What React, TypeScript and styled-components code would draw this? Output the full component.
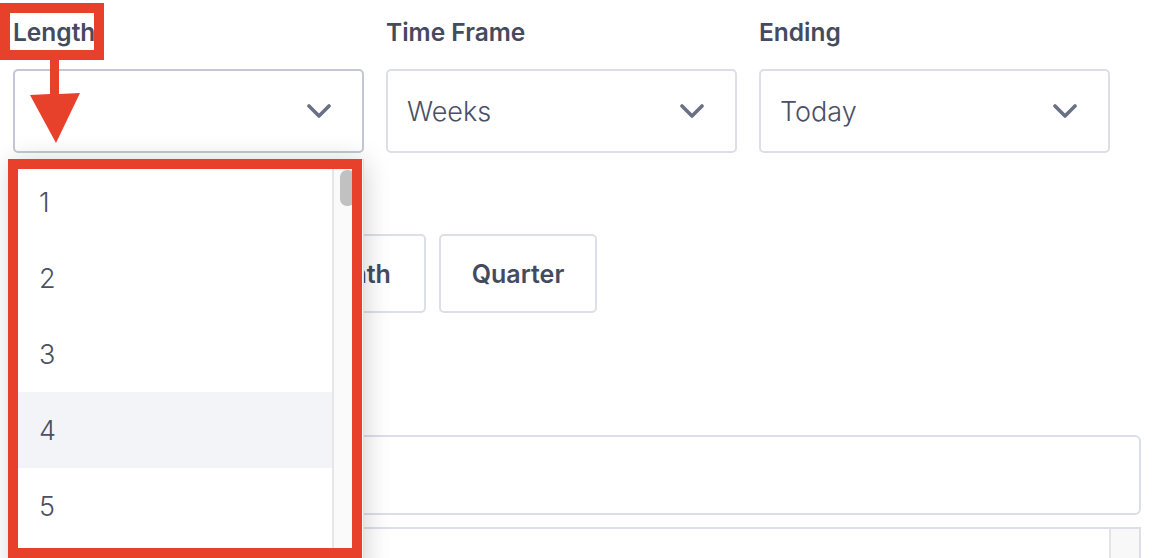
import React from "react";
import styled, { createGlobalStyle } from "styled-components";

const Global = createGlobalStyle`
  html, body { margin: 0; padding: 0; background: #ffffff; }
  body { font-family: "Inter", "Noto Sans", sans-serif; color: #444b5f; }
  * { box-sizing: border-box; }
`;

const Page = styled.div`
  position: relative;
  width: 1156px;
  height: 558px;
  overflow: hidden;
  padding: 16px 0 0 13px;
`;

const FieldRow = styled.div`
  display: grid;
  grid-template-columns: repeat(3, 351px);
  column-gap: 22px;
`;

const Field = styled.div`
  position: relative;
  display: flex;
  flex-direction: column;
`;

const Label = styled.div`
  font-size: 24.5px;
  line-height: 32px;
  font-weight: 600;
  color: #444b5f;
  margin-bottom: 21px;
`;

const SelectBox = styled.div<{ $focused?: boolean }>`
  height: 84px;
  border: 2px solid ${(p) => (p.$focused ? "#c4c7d5" : "#dcdfe6")};
  border-radius: 5px;
  display: flex;
  align-items: center;
  justify-content: space-between;
  padding: 0 31px 0 19px;
  font-size: 27px;
  font-weight: 300;
  color: #4a5065;
`;

const Section = styled.div<{ $top: number }>`
  margin-top: ${(p) => p.$top}px;
  display: flex;
  flex-direction: column;
`;

const ButtonRow = styled.div<{ $indent: number }>`
  display: flex;
  gap: 13px;
  padding-left: ${(p) => p.$indent}px;
`;

const ToggleButton = styled.div<{ $w: number }>`
  width: ${(p) => p.$w}px;
  height: 79px;
  border: 2px solid #dcdfe6;
  border-radius: 5px;
  display: flex;
  align-items: center;
  justify-content: center;
  font-size: 25px;
  font-weight: 600;
  color: #444b5f;
`;

const TextInput = styled.div`
  width: 1128px;
  height: 80px;
  border: 2px solid #dcdfe6;
  border-radius: 6px;
`;

const ListBox = styled.div`
  margin-top: 12px;
  width: 1128px;
  height: 60px;
  border: 2px solid #dcdfe6;
  border-bottom: none;
  display: flex;
  justify-content: flex-end;
`;

const ListTrack = styled.div`
  width: 30px;
  background: #f8f8f8;
  border-left: 2px solid #e4e4e4;
`;

const Dropdown = styled.div`
  position: absolute;
  left: 0;
  top: 143px;
  width: 351px;
  height: 420px;
  background: #ffffff;
  border: 1px solid #dcdfe6;
  box-shadow: 0 3px 26px rgba(0, 0, 0, 0.2);
  display: flex;
  padding-top: 4px;
  overflow: hidden;
`;

const OptionList = styled.div`
  flex: 1;
  display: flex;
  flex-direction: column;
`;

const Option = styled.div<{ $active?: boolean }>`
  flex-shrink: 0;
  height: 76px;
  display: flex;
  align-items: center;
  padding-left: 25px;
  font-size: 27px;
  font-weight: 300;
  color: #4a5065;
  background: ${(p) => (p.$active ? "#f3f4f8" : "#ffffff")};
`;

const Scrollbar = styled.div`
  position: relative;
  width: 31px;
  margin-top: -4px;
  background: #fafafa;
  border-left: 2px solid #e6e6e6;
`;

const Thumb = styled.div`
  position: absolute;
  left: 6px;
  top: 10px;
  width: 15px;
  height: 36px;
  border-radius: 7px;
  background: #c1c1c1;
`;

const RedFrame = styled.div<{ $l: number; $t: number; $w: number; $h: number }>`
  position: absolute;
  left: ${(p) => p.$l}px;
  top: ${(p) => p.$t}px;
  width: ${(p) => p.$w}px;
  height: ${(p) => p.$h}px;
  border: 10px solid #e8412b;
  pointer-events: none;
`;

const Arrow = styled.svg`
  position: absolute;
  left: 28px;
  top: 58px;
`;

const Chevron = () => (
  <svg width="24" height="14" viewBox="0 0 24 14">
    <polyline
      points="2,2 12,12 22,2"
      fill="none"
      stroke="#6b7085"
      strokeWidth="3.6"
      strokeLinecap="round"
      strokeLinejoin="round"
    />
  </svg>
);

export default function App() {
  return (
    <>
      <Global />
      <Page>
        <FieldRow>
          <Field>
            <Label>Length</Label>
            <SelectBox $focused>
              <span />
              <Chevron />
            </SelectBox>
            <Dropdown>
              <OptionList>
                {[1, 2, 3, 4, 5].map((n) => (
                  <Option key={n} $active={n === 4}>
                    {n}
                  </Option>
                ))}
              </OptionList>
              <Scrollbar>
                <Thumb />
              </Scrollbar>
            </Dropdown>
          </Field>
          <Field>
            <Label>Time Frame</Label>
            <SelectBox>
              <span>Weeks</span>
              <Chevron />
            </SelectBox>
          </Field>
          <Field>
            <Label>Ending</Label>
            <SelectBox>
              <span>Today</span>
              <Chevron />
            </SelectBox>
          </Field>
        </FieldRow>

        <Section $top={81}>
          <ButtonRow $indent={265}>
            <ToggleButton $w={148}>Month</ToggleButton>
            <ToggleButton $w={158}>Quarter</ToggleButton>
          </ButtonRow>
        </Section>

        <Section $top={122}>
          <TextInput />
          <ListBox>
            <ListTrack />
          </ListBox>
        </Section>

        <RedFrame $l={0} $t={3} $w={104} $h={57} />
        <Arrow width="56" height="90" viewBox="0 0 56 90">
          <polygon points="22,0 31,0 31,36 52,35 28,85 2,37 22,36" fill="#e8412b" />
        </Arrow>
        <RedFrame $l={8} $t={159} $w={354} $h={399} />
      </Page>
    </>
  );
}
